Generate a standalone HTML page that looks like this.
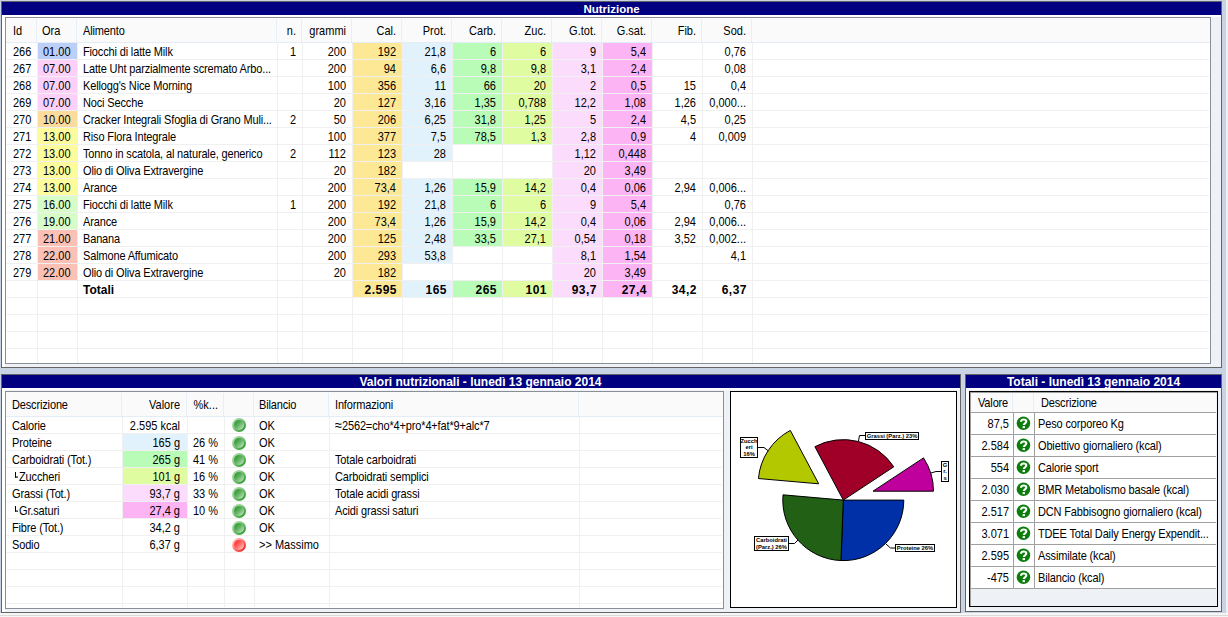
<!DOCTYPE html><html><head><meta charset="utf-8"><style>
html,body{margin:0;padding:0}
body{width:1228px;height:617px;overflow:hidden;position:relative;background:#c8d4e4;font-family:"Liberation Sans",sans-serif;font-size:11px;color:#000}
div{position:absolute}
.t{line-height:16px;white-space:nowrap}.s{transform:scaleY(1.12);transform-origin:0 12px}

.bulb{width:14px;height:14px;border-radius:50%;box-sizing:border-box}
.bulb.g{background:linear-gradient(135deg,#c0e4c0 0%,#8cc88c 40%,#109010 100%)}.bulb::after{content:'';position:absolute;left:2px;top:2px;width:10px;height:10px;border-radius:50%}.bulb.g::after{background:linear-gradient(135deg,#1c921c 0%,#5cb05c 45%,#d4ecd4 100%)}
.bulb.r{background:linear-gradient(135deg,#ffd0d0 0%,#ff9090 40%,#f00000 100%)}.bulb.r::after{background:linear-gradient(135deg,#ff1c1c 0%,#ff6060 45%,#ffd8d8 100%)}
.q{width:14px;height:14px;border-radius:50%;background:#0a7f0a;color:#fff;font-weight:bold;font-size:12px;line-height:14px;text-align:center}
.L{display:inline-block;width:3px;height:5px;border-left:1px solid #000;border-bottom:1px solid #000;margin-left:3px;margin-right:1px;vertical-align:3px;box-sizing:border-box}
</style></head><body>
<div style="left:1226px;top:0px;width:2px;height:617px;background:#eef0f2;"></div>
<div style="left:0px;top:613px;width:1228px;height:4px;background:#f6f6f6;"></div>
<div style="left:0px;top:615px;width:1228px;height:1px;background:#dadada;"></div>
<div style="left:1px;top:1px;width:1221px;height:367px;background:#eef2f6;box-sizing:border-box;border:1px solid #646464;"></div>
<div style="left:2px;top:2px;width:1219px;height:365px;background:linear-gradient(#fff,#fff) left/3px 100% no-repeat;"></div>
<div style="left:2px;top:2px;width:1219px;height:13px;background:#000080;"></div>
<div style="left:2px;top:15px;width:1219px;height:2px;background:#fff;"></div>
<div class="t" style="top:1px;left:311.5px;width:600px;text-align:center;font-weight:bold;font-size:11.5px;color:#fff;">Nutrizione</div>
<div style="left:5px;top:17px;width:1206px;height:347px;box-sizing:border-box;border:1px solid #8a8e96;background:#fff;"></div>
<div style="left:6px;top:18px;width:1204px;height:24px;background:#fafafa;"></div>
<div style="left:6px;top:42px;width:1204px;height:1px;background:#e4ecf6;"></div>
<div style="left:36px;top:19px;width:1px;height:23px;background:#e6eef8;"></div>
<div style="left:76px;top:19px;width:1px;height:23px;background:#e6eef8;"></div>
<div style="left:276px;top:19px;width:1px;height:23px;background:#e6eef8;"></div>
<div style="left:301px;top:19px;width:1px;height:23px;background:#e6eef8;"></div>
<div style="left:351px;top:19px;width:1px;height:23px;background:#e6eef8;"></div>
<div style="left:401px;top:19px;width:1px;height:23px;background:#e6eef8;"></div>
<div style="left:451px;top:19px;width:1px;height:23px;background:#e6eef8;"></div>
<div style="left:501px;top:19px;width:1px;height:23px;background:#e6eef8;"></div>
<div style="left:551px;top:19px;width:1px;height:23px;background:#e6eef8;"></div>
<div style="left:601px;top:19px;width:1px;height:23px;background:#e6eef8;"></div>
<div style="left:651px;top:19px;width:1px;height:23px;background:#e6eef8;"></div>
<div style="left:701px;top:19px;width:1px;height:23px;background:#e6eef8;"></div>
<div style="left:751px;top:19px;width:1px;height:23px;background:#e6eef8;"></div>
<div style="left:6px;top:59px;width:1203px;height:1px;background:#f0f0f0;"></div>
<div style="left:6px;top:76px;width:1203px;height:1px;background:#f0f0f0;"></div>
<div style="left:6px;top:93px;width:1203px;height:1px;background:#f0f0f0;"></div>
<div style="left:6px;top:110px;width:1203px;height:1px;background:#f0f0f0;"></div>
<div style="left:6px;top:127px;width:1203px;height:1px;background:#f0f0f0;"></div>
<div style="left:6px;top:144px;width:1203px;height:1px;background:#f0f0f0;"></div>
<div style="left:6px;top:161px;width:1203px;height:1px;background:#f0f0f0;"></div>
<div style="left:6px;top:178px;width:1203px;height:1px;background:#f0f0f0;"></div>
<div style="left:6px;top:195px;width:1203px;height:1px;background:#f0f0f0;"></div>
<div style="left:6px;top:212px;width:1203px;height:1px;background:#f0f0f0;"></div>
<div style="left:6px;top:229px;width:1203px;height:1px;background:#f0f0f0;"></div>
<div style="left:6px;top:246px;width:1203px;height:1px;background:#f0f0f0;"></div>
<div style="left:6px;top:263px;width:1203px;height:1px;background:#f0f0f0;"></div>
<div style="left:6px;top:280px;width:1203px;height:1px;background:#f0f0f0;"></div>
<div style="left:6px;top:297px;width:1203px;height:1px;background:#f0f0f0;"></div>
<div style="left:6px;top:314px;width:1203px;height:1px;background:#f0f0f0;"></div>
<div style="left:6px;top:331px;width:1203px;height:1px;background:#f0f0f0;"></div>
<div style="left:6px;top:348px;width:1203px;height:1px;background:#f0f0f0;"></div>
<div style="left:37px;top:43px;width:1px;height:320px;background:#f0f0f0;"></div>
<div style="left:77px;top:43px;width:1px;height:320px;background:#f0f0f0;"></div>
<div style="left:277px;top:43px;width:1px;height:320px;background:#f0f0f0;"></div>
<div style="left:302px;top:43px;width:1px;height:320px;background:#f0f0f0;"></div>
<div style="left:352px;top:43px;width:1px;height:320px;background:#f0f0f0;"></div>
<div style="left:402px;top:43px;width:1px;height:320px;background:#f0f0f0;"></div>
<div style="left:452px;top:43px;width:1px;height:320px;background:#f0f0f0;"></div>
<div style="left:502px;top:43px;width:1px;height:320px;background:#f0f0f0;"></div>
<div style="left:552px;top:43px;width:1px;height:320px;background:#f0f0f0;"></div>
<div style="left:602px;top:43px;width:1px;height:320px;background:#f0f0f0;"></div>
<div style="left:652px;top:43px;width:1px;height:320px;background:#f0f0f0;"></div>
<div style="left:702px;top:43px;width:1px;height:320px;background:#f0f0f0;"></div>
<div style="left:752px;top:43px;width:1px;height:320px;background:#f0f0f0;"></div>
<div style="left:38px;top:43px;width:39px;height:16px;background:#bccff8;"></div>
<div style="left:353px;top:43px;width:49px;height:16px;background:#fde895;"></div>
<div style="left:403px;top:43px;width:49px;height:16px;background:#e2f2fc;"></div>
<div style="left:453px;top:43px;width:49px;height:16px;background:#b8fcb8;"></div>
<div style="left:503px;top:43px;width:49px;height:16px;background:#e0fca0;"></div>
<div style="left:553px;top:43px;width:49px;height:16px;background:#fcdcfc;"></div>
<div style="left:603px;top:43px;width:49px;height:16px;background:#fcb4f4;"></div>
<div class="t s" style="top:44px;left:13px;">266</div>
<div class="t s" style="top:44px;left:43px;">01.00</div>
<div class="t s" style="top:44px;left:83px;letter-spacing:-0.15px;">Fiocchi di latte Milk</div>
<div class="t s" style="top:44px;right:932px;text-align:right;">1</div>
<div class="t s" style="top:44px;right:882px;text-align:right;">200</div>
<div class="t s" style="top:44px;right:832px;text-align:right;">192</div>
<div class="t s" style="top:44px;right:782px;text-align:right;">21,8</div>
<div class="t s" style="top:44px;right:732px;text-align:right;">6</div>
<div class="t s" style="top:44px;right:682px;text-align:right;">6</div>
<div class="t s" style="top:44px;right:632px;text-align:right;">9</div>
<div class="t s" style="top:44px;right:582px;text-align:right;">5,4</div>
<div class="t s" style="top:44px;right:482px;text-align:right;">0,76</div>
<div style="left:38px;top:60px;width:39px;height:16px;background:#fcd0f8;"></div>
<div style="left:353px;top:60px;width:49px;height:16px;background:#fde895;"></div>
<div style="left:403px;top:60px;width:49px;height:16px;background:#e2f2fc;"></div>
<div style="left:453px;top:60px;width:49px;height:16px;background:#b8fcb8;"></div>
<div style="left:503px;top:60px;width:49px;height:16px;background:#e0fca0;"></div>
<div style="left:553px;top:60px;width:49px;height:16px;background:#fcdcfc;"></div>
<div style="left:603px;top:60px;width:49px;height:16px;background:#fcb4f4;"></div>
<div class="t s" style="top:61px;left:13px;">267</div>
<div class="t s" style="top:61px;left:43px;">07.00</div>
<div class="t s" style="top:61px;left:83px;letter-spacing:-0.15px;">Latte Uht parzialmente scremato Arbo...</div>
<div class="t s" style="top:61px;right:882px;text-align:right;">200</div>
<div class="t s" style="top:61px;right:832px;text-align:right;">94</div>
<div class="t s" style="top:61px;right:782px;text-align:right;">6,6</div>
<div class="t s" style="top:61px;right:732px;text-align:right;">9,8</div>
<div class="t s" style="top:61px;right:682px;text-align:right;">9,8</div>
<div class="t s" style="top:61px;right:632px;text-align:right;">3,1</div>
<div class="t s" style="top:61px;right:582px;text-align:right;">2,4</div>
<div class="t s" style="top:61px;right:482px;text-align:right;">0,08</div>
<div style="left:38px;top:77px;width:39px;height:16px;background:#fcd0f8;"></div>
<div style="left:353px;top:77px;width:49px;height:16px;background:#fde895;"></div>
<div style="left:403px;top:77px;width:49px;height:16px;background:#e2f2fc;"></div>
<div style="left:453px;top:77px;width:49px;height:16px;background:#b8fcb8;"></div>
<div style="left:503px;top:77px;width:49px;height:16px;background:#e0fca0;"></div>
<div style="left:553px;top:77px;width:49px;height:16px;background:#fcdcfc;"></div>
<div style="left:603px;top:77px;width:49px;height:16px;background:#fcb4f4;"></div>
<div class="t s" style="top:78px;left:13px;">268</div>
<div class="t s" style="top:78px;left:43px;">07.00</div>
<div class="t s" style="top:78px;left:83px;letter-spacing:-0.15px;">Kellogg's Nice Morning</div>
<div class="t s" style="top:78px;right:882px;text-align:right;">100</div>
<div class="t s" style="top:78px;right:832px;text-align:right;">356</div>
<div class="t s" style="top:78px;right:782px;text-align:right;">11</div>
<div class="t s" style="top:78px;right:732px;text-align:right;">66</div>
<div class="t s" style="top:78px;right:682px;text-align:right;">20</div>
<div class="t s" style="top:78px;right:632px;text-align:right;">2</div>
<div class="t s" style="top:78px;right:582px;text-align:right;">0,5</div>
<div class="t s" style="top:78px;right:532px;text-align:right;">15</div>
<div class="t s" style="top:78px;right:482px;text-align:right;">0,4</div>
<div style="left:38px;top:94px;width:39px;height:16px;background:#fcd0f8;"></div>
<div style="left:353px;top:94px;width:49px;height:16px;background:#fde895;"></div>
<div style="left:403px;top:94px;width:49px;height:16px;background:#e2f2fc;"></div>
<div style="left:453px;top:94px;width:49px;height:16px;background:#b8fcb8;"></div>
<div style="left:503px;top:94px;width:49px;height:16px;background:#e0fca0;"></div>
<div style="left:553px;top:94px;width:49px;height:16px;background:#fcdcfc;"></div>
<div style="left:603px;top:94px;width:49px;height:16px;background:#fcb4f4;"></div>
<div class="t s" style="top:95px;left:13px;">269</div>
<div class="t s" style="top:95px;left:43px;">07.00</div>
<div class="t s" style="top:95px;left:83px;letter-spacing:-0.15px;">Noci Secche</div>
<div class="t s" style="top:95px;right:882px;text-align:right;">20</div>
<div class="t s" style="top:95px;right:832px;text-align:right;">127</div>
<div class="t s" style="top:95px;right:782px;text-align:right;">3,16</div>
<div class="t s" style="top:95px;right:732px;text-align:right;">1,35</div>
<div class="t s" style="top:95px;right:682px;text-align:right;">0,788</div>
<div class="t s" style="top:95px;right:632px;text-align:right;">12,2</div>
<div class="t s" style="top:95px;right:582px;text-align:right;">1,08</div>
<div class="t s" style="top:95px;right:532px;text-align:right;">1,26</div>
<div class="t s" style="top:95px;right:482px;text-align:right;">0,000...</div>
<div style="left:38px;top:111px;width:39px;height:16px;background:#fcdc9c;"></div>
<div style="left:353px;top:111px;width:49px;height:16px;background:#fde895;"></div>
<div style="left:403px;top:111px;width:49px;height:16px;background:#e2f2fc;"></div>
<div style="left:453px;top:111px;width:49px;height:16px;background:#b8fcb8;"></div>
<div style="left:503px;top:111px;width:49px;height:16px;background:#e0fca0;"></div>
<div style="left:553px;top:111px;width:49px;height:16px;background:#fcdcfc;"></div>
<div style="left:603px;top:111px;width:49px;height:16px;background:#fcb4f4;"></div>
<div class="t s" style="top:112px;left:13px;">270</div>
<div class="t s" style="top:112px;left:43px;">10.00</div>
<div class="t s" style="top:112px;left:83px;letter-spacing:-0.15px;">Cracker Integrali Sfoglia di Grano Muli...</div>
<div class="t s" style="top:112px;right:932px;text-align:right;">2</div>
<div class="t s" style="top:112px;right:882px;text-align:right;">50</div>
<div class="t s" style="top:112px;right:832px;text-align:right;">206</div>
<div class="t s" style="top:112px;right:782px;text-align:right;">6,25</div>
<div class="t s" style="top:112px;right:732px;text-align:right;">31,8</div>
<div class="t s" style="top:112px;right:682px;text-align:right;">1,25</div>
<div class="t s" style="top:112px;right:632px;text-align:right;">5</div>
<div class="t s" style="top:112px;right:582px;text-align:right;">2,4</div>
<div class="t s" style="top:112px;right:532px;text-align:right;">4,5</div>
<div class="t s" style="top:112px;right:482px;text-align:right;">0,25</div>
<div style="left:38px;top:128px;width:39px;height:16px;background:#fcfc9c;"></div>
<div style="left:353px;top:128px;width:49px;height:16px;background:#fde895;"></div>
<div style="left:403px;top:128px;width:49px;height:16px;background:#e2f2fc;"></div>
<div style="left:453px;top:128px;width:49px;height:16px;background:#b8fcb8;"></div>
<div style="left:503px;top:128px;width:49px;height:16px;background:#e0fca0;"></div>
<div style="left:553px;top:128px;width:49px;height:16px;background:#fcdcfc;"></div>
<div style="left:603px;top:128px;width:49px;height:16px;background:#fcb4f4;"></div>
<div class="t s" style="top:129px;left:13px;">271</div>
<div class="t s" style="top:129px;left:43px;">13.00</div>
<div class="t s" style="top:129px;left:83px;letter-spacing:-0.15px;">Riso Flora Integrale</div>
<div class="t s" style="top:129px;right:882px;text-align:right;">100</div>
<div class="t s" style="top:129px;right:832px;text-align:right;">377</div>
<div class="t s" style="top:129px;right:782px;text-align:right;">7,5</div>
<div class="t s" style="top:129px;right:732px;text-align:right;">78,5</div>
<div class="t s" style="top:129px;right:682px;text-align:right;">1,3</div>
<div class="t s" style="top:129px;right:632px;text-align:right;">2,8</div>
<div class="t s" style="top:129px;right:582px;text-align:right;">0,9</div>
<div class="t s" style="top:129px;right:532px;text-align:right;">4</div>
<div class="t s" style="top:129px;right:482px;text-align:right;">0,009</div>
<div style="left:38px;top:145px;width:39px;height:16px;background:#fcfc9c;"></div>
<div style="left:353px;top:145px;width:49px;height:16px;background:#fde895;"></div>
<div style="left:403px;top:145px;width:49px;height:16px;background:#e2f2fc;"></div>
<div style="left:553px;top:145px;width:49px;height:16px;background:#fcdcfc;"></div>
<div style="left:603px;top:145px;width:49px;height:16px;background:#fcb4f4;"></div>
<div class="t s" style="top:146px;left:13px;">272</div>
<div class="t s" style="top:146px;left:43px;">13.00</div>
<div class="t s" style="top:146px;left:83px;letter-spacing:-0.15px;">Tonno in scatola, al naturale, generico</div>
<div class="t s" style="top:146px;right:932px;text-align:right;">2</div>
<div class="t s" style="top:146px;right:882px;text-align:right;">112</div>
<div class="t s" style="top:146px;right:832px;text-align:right;">123</div>
<div class="t s" style="top:146px;right:782px;text-align:right;">28</div>
<div class="t s" style="top:146px;right:632px;text-align:right;">1,12</div>
<div class="t s" style="top:146px;right:582px;text-align:right;">0,448</div>
<div style="left:38px;top:162px;width:39px;height:16px;background:#fcfc9c;"></div>
<div style="left:353px;top:162px;width:49px;height:16px;background:#fde895;"></div>
<div style="left:553px;top:162px;width:49px;height:16px;background:#fcdcfc;"></div>
<div style="left:603px;top:162px;width:49px;height:16px;background:#fcb4f4;"></div>
<div class="t s" style="top:163px;left:13px;">273</div>
<div class="t s" style="top:163px;left:43px;">13.00</div>
<div class="t s" style="top:163px;left:83px;letter-spacing:-0.15px;">Olio di Oliva Extravergine</div>
<div class="t s" style="top:163px;right:882px;text-align:right;">20</div>
<div class="t s" style="top:163px;right:832px;text-align:right;">182</div>
<div class="t s" style="top:163px;right:632px;text-align:right;">20</div>
<div class="t s" style="top:163px;right:582px;text-align:right;">3,49</div>
<div style="left:38px;top:179px;width:39px;height:16px;background:#fcfc9c;"></div>
<div style="left:353px;top:179px;width:49px;height:16px;background:#fde895;"></div>
<div style="left:403px;top:179px;width:49px;height:16px;background:#e2f2fc;"></div>
<div style="left:453px;top:179px;width:49px;height:16px;background:#b8fcb8;"></div>
<div style="left:503px;top:179px;width:49px;height:16px;background:#e0fca0;"></div>
<div style="left:553px;top:179px;width:49px;height:16px;background:#fcdcfc;"></div>
<div style="left:603px;top:179px;width:49px;height:16px;background:#fcb4f4;"></div>
<div class="t s" style="top:180px;left:13px;">274</div>
<div class="t s" style="top:180px;left:43px;">13.00</div>
<div class="t s" style="top:180px;left:83px;letter-spacing:-0.15px;">Arance</div>
<div class="t s" style="top:180px;right:882px;text-align:right;">200</div>
<div class="t s" style="top:180px;right:832px;text-align:right;">73,4</div>
<div class="t s" style="top:180px;right:782px;text-align:right;">1,26</div>
<div class="t s" style="top:180px;right:732px;text-align:right;">15,9</div>
<div class="t s" style="top:180px;right:682px;text-align:right;">14,2</div>
<div class="t s" style="top:180px;right:632px;text-align:right;">0,4</div>
<div class="t s" style="top:180px;right:582px;text-align:right;">0,06</div>
<div class="t s" style="top:180px;right:532px;text-align:right;">2,94</div>
<div class="t s" style="top:180px;right:482px;text-align:right;">0,006...</div>
<div style="left:38px;top:196px;width:39px;height:16px;background:#d8fcc8;"></div>
<div style="left:353px;top:196px;width:49px;height:16px;background:#fde895;"></div>
<div style="left:403px;top:196px;width:49px;height:16px;background:#e2f2fc;"></div>
<div style="left:453px;top:196px;width:49px;height:16px;background:#b8fcb8;"></div>
<div style="left:503px;top:196px;width:49px;height:16px;background:#e0fca0;"></div>
<div style="left:553px;top:196px;width:49px;height:16px;background:#fcdcfc;"></div>
<div style="left:603px;top:196px;width:49px;height:16px;background:#fcb4f4;"></div>
<div class="t s" style="top:197px;left:13px;">275</div>
<div class="t s" style="top:197px;left:43px;">16.00</div>
<div class="t s" style="top:197px;left:83px;letter-spacing:-0.15px;">Fiocchi di latte Milk</div>
<div class="t s" style="top:197px;right:932px;text-align:right;">1</div>
<div class="t s" style="top:197px;right:882px;text-align:right;">200</div>
<div class="t s" style="top:197px;right:832px;text-align:right;">192</div>
<div class="t s" style="top:197px;right:782px;text-align:right;">21,8</div>
<div class="t s" style="top:197px;right:732px;text-align:right;">6</div>
<div class="t s" style="top:197px;right:682px;text-align:right;">6</div>
<div class="t s" style="top:197px;right:632px;text-align:right;">9</div>
<div class="t s" style="top:197px;right:582px;text-align:right;">5,4</div>
<div class="t s" style="top:197px;right:482px;text-align:right;">0,76</div>
<div style="left:38px;top:213px;width:39px;height:16px;background:#d8fcc8;"></div>
<div style="left:353px;top:213px;width:49px;height:16px;background:#fde895;"></div>
<div style="left:403px;top:213px;width:49px;height:16px;background:#e2f2fc;"></div>
<div style="left:453px;top:213px;width:49px;height:16px;background:#b8fcb8;"></div>
<div style="left:503px;top:213px;width:49px;height:16px;background:#e0fca0;"></div>
<div style="left:553px;top:213px;width:49px;height:16px;background:#fcdcfc;"></div>
<div style="left:603px;top:213px;width:49px;height:16px;background:#fcb4f4;"></div>
<div class="t s" style="top:214px;left:13px;">276</div>
<div class="t s" style="top:214px;left:43px;">19.00</div>
<div class="t s" style="top:214px;left:83px;letter-spacing:-0.15px;">Arance</div>
<div class="t s" style="top:214px;right:882px;text-align:right;">200</div>
<div class="t s" style="top:214px;right:832px;text-align:right;">73,4</div>
<div class="t s" style="top:214px;right:782px;text-align:right;">1,26</div>
<div class="t s" style="top:214px;right:732px;text-align:right;">15,9</div>
<div class="t s" style="top:214px;right:682px;text-align:right;">14,2</div>
<div class="t s" style="top:214px;right:632px;text-align:right;">0,4</div>
<div class="t s" style="top:214px;right:582px;text-align:right;">0,06</div>
<div class="t s" style="top:214px;right:532px;text-align:right;">2,94</div>
<div class="t s" style="top:214px;right:482px;text-align:right;">0,006...</div>
<div style="left:38px;top:230px;width:39px;height:16px;background:#fcc0b4;"></div>
<div style="left:353px;top:230px;width:49px;height:16px;background:#fde895;"></div>
<div style="left:403px;top:230px;width:49px;height:16px;background:#e2f2fc;"></div>
<div style="left:453px;top:230px;width:49px;height:16px;background:#b8fcb8;"></div>
<div style="left:503px;top:230px;width:49px;height:16px;background:#e0fca0;"></div>
<div style="left:553px;top:230px;width:49px;height:16px;background:#fcdcfc;"></div>
<div style="left:603px;top:230px;width:49px;height:16px;background:#fcb4f4;"></div>
<div class="t s" style="top:231px;left:13px;">277</div>
<div class="t s" style="top:231px;left:43px;">21.00</div>
<div class="t s" style="top:231px;left:83px;letter-spacing:-0.15px;">Banana</div>
<div class="t s" style="top:231px;right:882px;text-align:right;">200</div>
<div class="t s" style="top:231px;right:832px;text-align:right;">125</div>
<div class="t s" style="top:231px;right:782px;text-align:right;">2,48</div>
<div class="t s" style="top:231px;right:732px;text-align:right;">33,5</div>
<div class="t s" style="top:231px;right:682px;text-align:right;">27,1</div>
<div class="t s" style="top:231px;right:632px;text-align:right;">0,54</div>
<div class="t s" style="top:231px;right:582px;text-align:right;">0,18</div>
<div class="t s" style="top:231px;right:532px;text-align:right;">3,52</div>
<div class="t s" style="top:231px;right:482px;text-align:right;">0,002...</div>
<div style="left:38px;top:247px;width:39px;height:16px;background:#fcc0b4;"></div>
<div style="left:353px;top:247px;width:49px;height:16px;background:#fde895;"></div>
<div style="left:403px;top:247px;width:49px;height:16px;background:#e2f2fc;"></div>
<div style="left:553px;top:247px;width:49px;height:16px;background:#fcdcfc;"></div>
<div style="left:603px;top:247px;width:49px;height:16px;background:#fcb4f4;"></div>
<div class="t s" style="top:248px;left:13px;">278</div>
<div class="t s" style="top:248px;left:43px;">22.00</div>
<div class="t s" style="top:248px;left:83px;letter-spacing:-0.15px;">Salmone Affumicato</div>
<div class="t s" style="top:248px;right:882px;text-align:right;">200</div>
<div class="t s" style="top:248px;right:832px;text-align:right;">293</div>
<div class="t s" style="top:248px;right:782px;text-align:right;">53,8</div>
<div class="t s" style="top:248px;right:632px;text-align:right;">8,1</div>
<div class="t s" style="top:248px;right:582px;text-align:right;">1,54</div>
<div class="t s" style="top:248px;right:482px;text-align:right;">4,1</div>
<div style="left:38px;top:264px;width:39px;height:16px;background:#fcc0b4;"></div>
<div style="left:353px;top:264px;width:49px;height:16px;background:#fde895;"></div>
<div style="left:553px;top:264px;width:49px;height:16px;background:#fcdcfc;"></div>
<div style="left:603px;top:264px;width:49px;height:16px;background:#fcb4f4;"></div>
<div class="t s" style="top:265px;left:13px;">279</div>
<div class="t s" style="top:265px;left:43px;">22.00</div>
<div class="t s" style="top:265px;left:83px;letter-spacing:-0.15px;">Olio di Oliva Extravergine</div>
<div class="t s" style="top:265px;right:882px;text-align:right;">20</div>
<div class="t s" style="top:265px;right:832px;text-align:right;">182</div>
<div class="t s" style="top:265px;right:632px;text-align:right;">20</div>
<div class="t s" style="top:265px;right:582px;text-align:right;">3,49</div>
<div style="left:353px;top:281px;width:49px;height:16px;background:#fde895;"></div>
<div style="left:403px;top:281px;width:49px;height:16px;background:#e2f2fc;"></div>
<div style="left:453px;top:281px;width:49px;height:16px;background:#b8fcb8;"></div>
<div style="left:503px;top:281px;width:49px;height:16px;background:#e0fca0;"></div>
<div style="left:553px;top:281px;width:49px;height:16px;background:#fcdcfc;"></div>
<div style="left:603px;top:281px;width:49px;height:16px;background:#fcb4f4;"></div>
<div class="t" style="top:282px;left:83px;font-weight:bold;font-size:12px;">Totali</div>
<div class="t" style="top:282px;right:831px;text-align:right;font-weight:bold;font-size:12px;letter-spacing:0.5px;">2.595</div>
<div class="t" style="top:282px;right:781px;text-align:right;font-weight:bold;font-size:12px;letter-spacing:0.5px;">165</div>
<div class="t" style="top:282px;right:731px;text-align:right;font-weight:bold;font-size:12px;letter-spacing:0.5px;">265</div>
<div class="t" style="top:282px;right:681px;text-align:right;font-weight:bold;font-size:12px;letter-spacing:0.5px;">101</div>
<div class="t" style="top:282px;right:631px;text-align:right;font-weight:bold;font-size:12px;letter-spacing:0.5px;">93,7</div>
<div class="t" style="top:282px;right:581px;text-align:right;font-weight:bold;font-size:12px;letter-spacing:0.5px;">27,4</div>
<div class="t" style="top:282px;right:531px;text-align:right;font-weight:bold;font-size:12px;letter-spacing:0.5px;">34,2</div>
<div class="t" style="top:282px;right:481px;text-align:right;font-weight:bold;font-size:12px;letter-spacing:0.5px;">6,37</div>
<div class="t s" style="top:23px;left:13px;">Id</div>
<div class="t s" style="top:23px;left:42px;">Ora</div>
<div class="t s" style="top:23px;left:83px;letter-spacing:-0.15px;">Alimento</div>
<div class="t s" style="top:23px;right:932px;text-align:right;">n.</div>
<div class="t s" style="top:23px;right:882px;text-align:right;">grammi</div>
<div class="t s" style="top:23px;right:832px;text-align:right;">Cal.</div>
<div class="t s" style="top:23px;right:782px;text-align:right;">Prot.</div>
<div class="t s" style="top:23px;right:732px;text-align:right;">Carb.</div>
<div class="t s" style="top:23px;right:682px;text-align:right;">Zuc.</div>
<div class="t s" style="top:23px;right:632px;text-align:right;">G.tot.</div>
<div class="t s" style="top:23px;right:582px;text-align:right;">G.sat.</div>
<div class="t s" style="top:23px;right:532px;text-align:right;">Fib.</div>
<div class="t s" style="top:23px;right:482px;text-align:right;">Sod.</div>
<div style="left:1px;top:374px;width:960px;height:239px;background:#eef2f6;box-sizing:border-box;border:1px solid #646464;"></div>
<div style="left:2px;top:375px;width:958px;height:237px;background:linear-gradient(#fff,#fff) left/3px 100% no-repeat;"></div>
<div style="left:2px;top:375px;width:958px;height:13px;background:#000080;"></div>
<div style="left:2px;top:388px;width:958px;height:2px;background:#fff;"></div>
<div class="t" style="top:374px;left:180.5px;width:600px;text-align:center;font-weight:bold;font-size:12px;color:#fff;">Valori nutrizionali - lunedì 13 gennaio 2014</div>
<div style="left:5px;top:391px;width:719px;height:218px;box-sizing:border-box;border:1px solid #8a8e96;background:#fff;"></div>
<div style="left:6px;top:392px;width:717px;height:24px;background:#fafafa;"></div>
<div style="left:6px;top:416px;width:717px;height:1px;background:#e4ecf6;"></div>
<div style="left:121px;top:393px;width:1px;height:23px;background:#e6eef8;"></div>
<div style="left:186px;top:393px;width:1px;height:23px;background:#e6eef8;"></div>
<div style="left:223px;top:393px;width:1px;height:23px;background:#e6eef8;"></div>
<div style="left:253px;top:393px;width:1px;height:23px;background:#e6eef8;"></div>
<div style="left:328px;top:393px;width:1px;height:23px;background:#e6eef8;"></div>
<div style="left:578px;top:393px;width:1px;height:23px;background:#e6eef8;"></div>
<div style="left:6px;top:433px;width:716px;height:1px;background:#f0f0f0;"></div>
<div style="left:6px;top:450px;width:716px;height:1px;background:#f0f0f0;"></div>
<div style="left:6px;top:467px;width:716px;height:1px;background:#f0f0f0;"></div>
<div style="left:6px;top:484px;width:716px;height:1px;background:#f0f0f0;"></div>
<div style="left:6px;top:501px;width:716px;height:1px;background:#f0f0f0;"></div>
<div style="left:6px;top:518px;width:716px;height:1px;background:#f0f0f0;"></div>
<div style="left:6px;top:535px;width:716px;height:1px;background:#f0f0f0;"></div>
<div style="left:6px;top:552px;width:716px;height:1px;background:#f0f0f0;"></div>
<div style="left:6px;top:569px;width:716px;height:1px;background:#f0f0f0;"></div>
<div style="left:6px;top:586px;width:716px;height:1px;background:#f0f0f0;"></div>
<div style="left:6px;top:603px;width:716px;height:1px;background:#f0f0f0;"></div>
<div style="left:122px;top:417px;width:1px;height:190px;background:#f0f0f0;"></div>
<div style="left:187px;top:417px;width:1px;height:190px;background:#f0f0f0;"></div>
<div style="left:224px;top:417px;width:1px;height:190px;background:#f0f0f0;"></div>
<div style="left:254px;top:417px;width:1px;height:190px;background:#f0f0f0;"></div>
<div style="left:329px;top:417px;width:1px;height:190px;background:#f0f0f0;"></div>
<div style="left:579px;top:417px;width:1px;height:190px;background:#f0f0f0;"></div>
<div class="t s" style="top:418px;left:12px;letter-spacing:-0.15px;">Calorie</div>
<div class="t s" style="top:418px;right:1048px;text-align:right;">2.595 kcal</div>
<div class="bulb g" style="left:232px;top:418px"></div>
<div class="t s" style="top:418px;left:259px;">OK</div>
<div class="t s" style="top:418px;left:335px;letter-spacing:-0.15px;"><span style="font-size:13px;line-height:10px">≈</span>2562=cho*4+pro*4+fat*9+alc*7</div>
<div style="left:123px;top:434px;width:64px;height:16px;background:#e2f2fc;"></div>
<div class="t s" style="top:435px;left:12px;letter-spacing:-0.15px;">Proteine</div>
<div class="t s" style="top:435px;right:1048px;text-align:right;">165 g</div>
<div class="t s" style="top:435px;right:1010px;text-align:right;">26 %</div>
<div class="bulb g" style="left:232px;top:436px"></div>
<div class="t s" style="top:435px;left:259px;">OK</div>
<div style="left:123px;top:451px;width:64px;height:16px;background:#b8fcb8;"></div>
<div class="t s" style="top:452px;left:12px;letter-spacing:-0.15px;">Carboidrati (Tot.)</div>
<div class="t s" style="top:452px;right:1048px;text-align:right;">265 g</div>
<div class="t s" style="top:452px;right:1010px;text-align:right;">41 %</div>
<div class="bulb g" style="left:232px;top:453px"></div>
<div class="t s" style="top:452px;left:259px;">OK</div>
<div class="t s" style="top:452px;left:335px;letter-spacing:-0.15px;">Totale carboidrati</div>
<div style="left:123px;top:468px;width:64px;height:16px;background:#e0fca0;"></div>
<div class="t s" style="top:469px;left:12px;letter-spacing:-0.15px;"><span class="L"></span>Zuccheri</div>
<div class="t s" style="top:469px;right:1048px;text-align:right;">101 g</div>
<div class="t s" style="top:469px;right:1010px;text-align:right;">16 %</div>
<div class="bulb g" style="left:232px;top:470px"></div>
<div class="t s" style="top:469px;left:259px;">OK</div>
<div class="t s" style="top:469px;left:335px;letter-spacing:-0.15px;">Carboidrati semplici</div>
<div style="left:123px;top:485px;width:64px;height:16px;background:#fcdcfc;"></div>
<div class="t s" style="top:486px;left:12px;letter-spacing:-0.15px;">Grassi (Tot.)</div>
<div class="t s" style="top:486px;right:1048px;text-align:right;">93,7 g</div>
<div class="t s" style="top:486px;right:1010px;text-align:right;">33 %</div>
<div class="bulb g" style="left:232px;top:487px"></div>
<div class="t s" style="top:486px;left:259px;">OK</div>
<div class="t s" style="top:486px;left:335px;letter-spacing:-0.15px;">Totale acidi grassi</div>
<div style="left:123px;top:502px;width:64px;height:16px;background:#fcb4f4;"></div>
<div class="t s" style="top:503px;left:12px;letter-spacing:-0.15px;"><span class="L"></span>Gr.saturi</div>
<div class="t s" style="top:503px;right:1048px;text-align:right;">27,4 g</div>
<div class="t s" style="top:503px;right:1010px;text-align:right;">10 %</div>
<div class="bulb g" style="left:232px;top:504px"></div>
<div class="t s" style="top:503px;left:259px;">OK</div>
<div class="t s" style="top:503px;left:335px;letter-spacing:-0.15px;">Acidi grassi saturi</div>
<div class="t s" style="top:520px;left:12px;letter-spacing:-0.15px;">Fibre (Tot.)</div>
<div class="t s" style="top:520px;right:1048px;text-align:right;">34,2 g</div>
<div class="bulb g" style="left:232px;top:521px"></div>
<div class="t s" style="top:520px;left:259px;">OK</div>
<div class="t s" style="top:537px;left:12px;letter-spacing:-0.15px;">Sodio</div>
<div class="t s" style="top:537px;right:1048px;text-align:right;">6,37 g</div>
<div class="bulb r" style="left:232px;top:538px"></div>
<div class="t s" style="top:537px;left:259px;">&gt;&gt; Massimo</div>
<div class="t s" style="top:397px;left:12px;letter-spacing:-0.15px;">Descrizione</div>
<div class="t s" style="top:397px;right:1048px;text-align:right;">Valore</div>
<div class="t s" style="top:397px;right:1010px;text-align:right;">%k...</div>
<div class="t s" style="top:397px;left:259px;letter-spacing:-0.15px;">Bilancio</div>
<div class="t s" style="top:397px;left:335px;letter-spacing:-0.15px;">Informazioni</div>
<div style="left:730px;top:391px;width:227px;height:217px;box-sizing:border-box;border:1px solid #000;background:#fff;"></div>
<svg style="position:absolute;left:730px;top:391px" width="227" height="217" viewBox="730 391 227 217">
<path d="M843.30,500.10 L903.80,500.10 A60.5,60.5 0 0 1 840.98,560.56 Z" fill="#0030a8" stroke="#000" stroke-width="1" stroke-linejoin="miter"/>
<path d="M843.30,500.10 L840.98,560.56 A60.5,60.5 0 0 1 783.03,494.83 Z" fill="#226016" stroke="#000" stroke-width="1" stroke-linejoin="miter"/>
<path d="M818.70,483.82 L758.43,478.54 A60.5,60.5 0 0 1 790.30,430.40 Z" fill="#b4c800" stroke="#000" stroke-width="1" stroke-linejoin="miter"/>
<path d="M843.30,500.10 L814.90,446.68 A60.5,60.5 0 0 1 893.81,466.80 Z" fill="#a00028" stroke="#000" stroke-width="1" stroke-linejoin="miter"/>
<path d="M872.99,491.19 L923.50,457.89 A60.5,60.5 0 0 1 933.49,491.19 Z" fill="#c0009c" stroke="#000" stroke-width="1" stroke-linejoin="miter"/>
<polyline points="858.5,441 859.5,435.5 865.5,435.5" fill="none" stroke="#000" stroke-width="1"/>
<rect x="865.5" y="432.5" width="53" height="7" fill="#fff" stroke="#000" stroke-width="1"/>
<text x="892.0" y="437.8" font-family="Liberation Sans" font-size="5.8" font-weight="bold" text-anchor="middle" fill="#000">Grassi (Parz.) 23%</text>
<polyline points="886,544 890.5,548 895.5,548" fill="none" stroke="#000" stroke-width="1"/>
<rect x="895.5" y="544.5" width="39" height="7" fill="#fff" stroke="#000" stroke-width="1"/>
<text x="915.0" y="549.8" font-family="Liberation Sans" font-size="5.8" font-weight="bold" text-anchor="middle" fill="#000">Proteine 26%</text>
<polyline points="798,540 794.5,543.5 788.5,543.5" fill="none" stroke="#000" stroke-width="1"/>
<rect x="754.5" y="536.5" width="34" height="14" fill="#fff" stroke="#000" stroke-width="1"/>
<text x="771.5" y="541.8" font-family="Liberation Sans" font-size="5.8" font-weight="bold" text-anchor="middle" fill="#000">Carboidrati</text>
<text x="771.5" y="548.8" font-family="Liberation Sans" font-size="5.8" font-weight="bold" text-anchor="middle" fill="#000">(Parz.) 26%</text>
<polyline points="768.5,451 764,447.5 757.5,447.5" fill="none" stroke="#000" stroke-width="1"/>
<rect x="740.5" y="437.5" width="17" height="20" fill="#fff" stroke="#000" stroke-width="1"/>
<text x="749.0" y="442.5" font-family="Liberation Sans" font-size="5.8" font-weight="bold" text-anchor="middle" fill="#000">Zucch</text>
<text x="749.0" y="449.1" font-family="Liberation Sans" font-size="5.8" font-weight="bold" text-anchor="middle" fill="#000">eri</text>
<text x="749.0" y="455.8" font-family="Liberation Sans" font-size="5.8" font-weight="bold" text-anchor="middle" fill="#000">16%</text>
<polyline points="931,473 936,471.5 941.5,471.5" fill="none" stroke="#000" stroke-width="1"/>
<rect x="941.5" y="461.5" width="7" height="20" fill="#fff" stroke="#000" stroke-width="1"/>
<text x="945.0" y="466.5" font-family="Liberation Sans" font-size="5.8" font-weight="bold" text-anchor="middle" fill="#000">G</text>
<text x="945.0" y="473.1" font-family="Liberation Sans" font-size="5.8" font-weight="bold" text-anchor="middle" fill="#000">r.</text>
<text x="945.0" y="479.8" font-family="Liberation Sans" font-size="5.8" font-weight="bold" text-anchor="middle" fill="#000">s</text>
</svg>
<div style="left:965px;top:374px;width:257px;height:238px;background:#eef2f6;box-sizing:border-box;border:1px solid #646464;"></div>
<div style="left:966px;top:375px;width:255px;height:236px;background:linear-gradient(#fff,#fff) left/3px 100% no-repeat;"></div>
<div style="left:966px;top:375px;width:255px;height:13px;background:#000080;"></div>
<div style="left:966px;top:388px;width:255px;height:2px;background:#fff;"></div>
<div class="t" style="top:374px;left:793.5px;width:600px;text-align:center;font-weight:bold;font-size:12px;color:#fff;">Totali - lunedì 13 gennaio 2014</div>
<div style="left:969px;top:391px;width:249px;height:216px;box-sizing:border-box;border:1px solid #000;background:#eef2f6;"></div>
<div style="left:970px;top:392px;width:247px;height:214px;box-sizing:border-box;border-left:1px solid #a0a0a0;border-top:1px solid #a0a0a0;"></div>
<div style="left:971px;top:393px;width:245px;height:19px;background:#fafafa;"></div>
<div style="left:971px;top:412px;width:245px;height:177px;background:#fff;"></div>
<div style="left:971px;top:412px;width:245px;height:1px;background:#a0a0a0;"></div>
<div style="left:1012px;top:393px;width:1px;height:19px;background:#e6eef8;"></div>
<div style="left:1033px;top:393px;width:1px;height:19px;background:#e6eef8;"></div>
<div style="left:971px;top:434px;width:245px;height:1px;background:#a0a0a0;"></div>
<div class="t s" style="top:416px;right:219px;text-align:right;">87,5</div>
<div class="t s" style="top:416px;left:1038px;letter-spacing:-0.15px;">Peso corporeo Kg</div>
<svg style="position:absolute;left:1016px;top:416px" width="16" height="16" viewBox="0 0 16 16"><g transform="translate(0.7,0.4)"><circle cx="6.75" cy="6.8" r="6.75" fill="#0b7d0b"/><path d="M4.3,5.4 C4.3,2.3 9.6,2.3 9.6,5.2 C9.6,6.9 7.1,6.9 7.1,8.6" fill="none" stroke="#fff" stroke-width="2.1"/><rect x="5.9" y="9.7" width="2.4" height="2" fill="#fff"/></g></svg>
<div style="left:971px;top:456px;width:245px;height:1px;background:#a0a0a0;"></div>
<div class="t s" style="top:438px;right:219px;text-align:right;">2.584</div>
<div class="t s" style="top:438px;left:1038px;letter-spacing:-0.15px;">Obiettivo giornaliero (kcal)</div>
<svg style="position:absolute;left:1016px;top:438px" width="16" height="16" viewBox="0 0 16 16"><g transform="translate(0.7,0.4)"><circle cx="6.75" cy="6.8" r="6.75" fill="#0b7d0b"/><path d="M4.3,5.4 C4.3,2.3 9.6,2.3 9.6,5.2 C9.6,6.9 7.1,6.9 7.1,8.6" fill="none" stroke="#fff" stroke-width="2.1"/><rect x="5.9" y="9.7" width="2.4" height="2" fill="#fff"/></g></svg>
<div style="left:971px;top:478px;width:245px;height:1px;background:#a0a0a0;"></div>
<div class="t s" style="top:460px;right:219px;text-align:right;">554</div>
<div class="t s" style="top:460px;left:1038px;letter-spacing:-0.15px;">Calorie sport</div>
<svg style="position:absolute;left:1016px;top:460px" width="16" height="16" viewBox="0 0 16 16"><g transform="translate(0.7,0.4)"><circle cx="6.75" cy="6.8" r="6.75" fill="#0b7d0b"/><path d="M4.3,5.4 C4.3,2.3 9.6,2.3 9.6,5.2 C9.6,6.9 7.1,6.9 7.1,8.6" fill="none" stroke="#fff" stroke-width="2.1"/><rect x="5.9" y="9.7" width="2.4" height="2" fill="#fff"/></g></svg>
<div style="left:971px;top:500px;width:245px;height:1px;background:#a0a0a0;"></div>
<div class="t s" style="top:482px;right:219px;text-align:right;">2.030</div>
<div class="t s" style="top:482px;left:1038px;letter-spacing:-0.15px;">BMR Metabolismo basale (kcal)</div>
<svg style="position:absolute;left:1016px;top:482px" width="16" height="16" viewBox="0 0 16 16"><g transform="translate(0.7,0.4)"><circle cx="6.75" cy="6.8" r="6.75" fill="#0b7d0b"/><path d="M4.3,5.4 C4.3,2.3 9.6,2.3 9.6,5.2 C9.6,6.9 7.1,6.9 7.1,8.6" fill="none" stroke="#fff" stroke-width="2.1"/><rect x="5.9" y="9.7" width="2.4" height="2" fill="#fff"/></g></svg>
<div style="left:971px;top:522px;width:245px;height:1px;background:#a0a0a0;"></div>
<div class="t s" style="top:504px;right:219px;text-align:right;">2.517</div>
<div class="t s" style="top:504px;left:1038px;letter-spacing:-0.15px;">DCN Fabbisogno giornaliero (kcal)</div>
<svg style="position:absolute;left:1016px;top:504px" width="16" height="16" viewBox="0 0 16 16"><g transform="translate(0.7,0.4)"><circle cx="6.75" cy="6.8" r="6.75" fill="#0b7d0b"/><path d="M4.3,5.4 C4.3,2.3 9.6,2.3 9.6,5.2 C9.6,6.9 7.1,6.9 7.1,8.6" fill="none" stroke="#fff" stroke-width="2.1"/><rect x="5.9" y="9.7" width="2.4" height="2" fill="#fff"/></g></svg>
<div style="left:971px;top:544px;width:245px;height:1px;background:#a0a0a0;"></div>
<div class="t s" style="top:526px;right:219px;text-align:right;">3.071</div>
<div class="t s" style="top:526px;left:1038px;letter-spacing:-0.15px;">TDEE Total Daily Energy Expendit...</div>
<svg style="position:absolute;left:1016px;top:526px" width="16" height="16" viewBox="0 0 16 16"><g transform="translate(0.7,0.4)"><circle cx="6.75" cy="6.8" r="6.75" fill="#0b7d0b"/><path d="M4.3,5.4 C4.3,2.3 9.6,2.3 9.6,5.2 C9.6,6.9 7.1,6.9 7.1,8.6" fill="none" stroke="#fff" stroke-width="2.1"/><rect x="5.9" y="9.7" width="2.4" height="2" fill="#fff"/></g></svg>
<div style="left:971px;top:566px;width:245px;height:1px;background:#a0a0a0;"></div>
<div class="t s" style="top:548px;right:219px;text-align:right;">2.595</div>
<div class="t s" style="top:548px;left:1038px;letter-spacing:-0.15px;">Assimilate (kcal)</div>
<svg style="position:absolute;left:1016px;top:548px" width="16" height="16" viewBox="0 0 16 16"><g transform="translate(0.7,0.4)"><circle cx="6.75" cy="6.8" r="6.75" fill="#0b7d0b"/><path d="M4.3,5.4 C4.3,2.3 9.6,2.3 9.6,5.2 C9.6,6.9 7.1,6.9 7.1,8.6" fill="none" stroke="#fff" stroke-width="2.1"/><rect x="5.9" y="9.7" width="2.4" height="2" fill="#fff"/></g></svg>
<div style="left:971px;top:588px;width:245px;height:1px;background:#a0a0a0;"></div>
<div class="t s" style="top:570px;right:219px;text-align:right;">-475</div>
<div class="t s" style="top:570px;left:1038px;letter-spacing:-0.15px;">Bilancio (kcal)</div>
<svg style="position:absolute;left:1016px;top:570px" width="16" height="16" viewBox="0 0 16 16"><g transform="translate(0.7,0.4)"><circle cx="6.75" cy="6.8" r="6.75" fill="#0b7d0b"/><path d="M4.3,5.4 C4.3,2.3 9.6,2.3 9.6,5.2 C9.6,6.9 7.1,6.9 7.1,8.6" fill="none" stroke="#fff" stroke-width="2.1"/><rect x="5.9" y="9.7" width="2.4" height="2" fill="#fff"/></g></svg>
<div style="left:1013px;top:413px;width:1px;height:176px;background:#a0a0a0;"></div>
<div style="left:1034px;top:413px;width:1px;height:176px;background:#a0a0a0;"></div>
<div class="t s" style="top:395px;left:978px;letter-spacing:-0.15px;">Valore</div>
<div class="t s" style="top:395px;left:1041px;letter-spacing:-0.15px;">Descrizione</div>
</body></html>
